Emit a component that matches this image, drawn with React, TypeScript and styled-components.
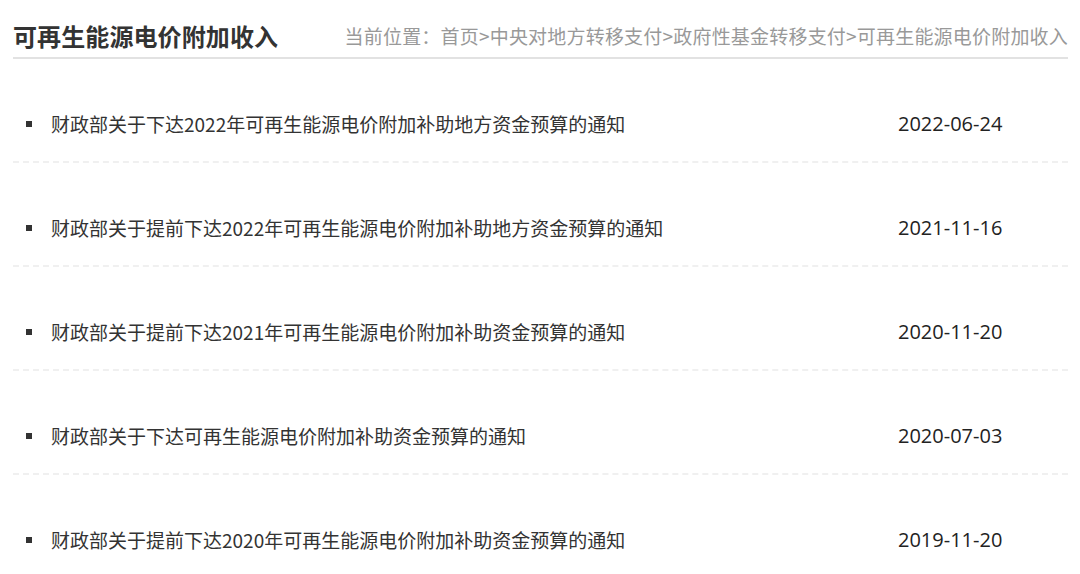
import * as React from "react"
import styled, { createGlobalStyle } from "styled-components"

const GlobalStyle = createGlobalStyle`
  body {
    margin: 0;
    background: #ffffff;
    font-family: "Noto Sans CJK SC", "Noto Sans", sans-serif;
  }
`

const items = [
  { title: "财政部关于下达2022年可再生能源电价附加补助地方资金预算的通知", date: "2022-06-24" },
  { title: "财政部关于提前下达2022年可再生能源电价附加补助地方资金预算的通知", date: "2021-11-16" },
  { title: "财政部关于提前下达2021年可再生能源电价附加补助资金预算的通知", date: "2020-11-20" },
  { title: "财政部关于下达可再生能源电价附加补助资金预算的通知", date: "2020-07-03" },
  { title: "财政部关于提前下达2020年可再生能源电价附加补助资金预算的通知", date: "2019-11-20" },
]

const App = () => {
  return (
    <>
      <GlobalStyle />
      <Page>
        <Header>
          <Title>可再生能源电价附加收入</Title>
          <Crumbs>
            当前位置：首页&gt;中央对地方转移支付&gt;政府性基金转移支付&gt;可再生能源电价附加收入
          </Crumbs>
        </Header>
        <List>
          {items.map((item) => (
            <Row key={item.title + item.date}>
              <Bullet />
              <ItemTitle>{item.title}</ItemTitle>
              <ItemDate>{item.date}</ItemDate>
            </Row>
          ))}
        </List>
      </Page>
    </>
  )
}
export default App

const Page = styled.div`
  width: 1055px;
  margin-left: 13px;
`

const Header = styled.div`
  display: flex;
  align-items: center;
  justify-content: space-between;
  height: 59px;
  padding-top: 1px;
  border-bottom: 2px solid #e2e2e2;
  box-sizing: border-box;
`

const Title = styled.h1`
  margin: 0;
  font-size: 24px;
  font-weight: bold;
  color: #333333;
  line-height: 30px;
  margin-top: 14px;
  letter-spacing: 0.1px;
`

const Crumbs = styled.div`
  font-size: 19px;
  color: #999999;
  line-height: 30px;
  margin-top: 14px;
  letter-spacing: 0.2px;
`

const List = styled.ul`
  list-style: none;
  margin: 0;
  padding: 0;
`

const Row = styled.li`
  display: flex;
  align-items: center;
  padding: 50px 0 22px;
  border-bottom: 2px dashed #f0f0f0;
  line-height: 30px;
`

const Bullet = styled.span`
  width: 6px;
  height: 6px;
  background: #333333;
  margin-left: 13px;
  margin-right: 19px;
  flex-shrink: 0;
`

const ItemTitle = styled.span`
  flex: 1;
  font-size: 19px;
  color: #333333;
`

const ItemDate = styled.span`
  width: 170px;
  font-family: "Open Sans", "Noto Sans", sans-serif;
  font-size: 20px;
  color: #222222;
`
